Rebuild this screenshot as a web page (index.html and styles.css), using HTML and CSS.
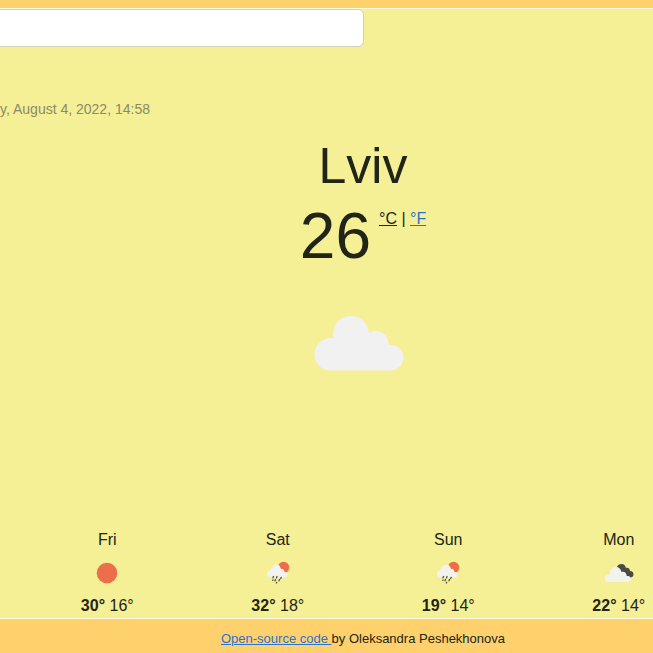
FILE: index.html
```html
<!DOCTYPE html>
<html lang="en">
<head>
<meta charset="utf-8">
<meta name="viewport" content="width=device-width, initial-scale=1">
<title>Weather</title>
<link rel="stylesheet" href="styles.css">
</head>
<body>
<svg class="sprites" aria-hidden="true">
  <defs>
    <symbol id="cloud" viewBox="0 0 90 56">
      <path d="M16 55.500A16 16 0 0 1 0.500 39C0.500 29 9 22 19 23C18 10 25 1 37 1C47 1 54 8 55 18C63 13 74 17 75 30C83 29 89.500 35 89.500 42C89.500 50 84 55.500 76 55.500Z"/>
    </symbol>
    <symbol id="rain" viewBox="0 0 24 24">
      <circle class="sun" cx="17.500" cy="6.500" r="5.700"/>
      <path class="cloud-fill" d="M5 16.500C2 16.500 1 14.500 1 13C1 10.500 3 9 5 9.200C5.200 6 7.500 3.500 10.500 3.500C13 3.500 14.500 5.500 14.800 7.800C17 7.500 18.300 9 18.500 11C20.500 11 21.500 12 21.500 13.700C21.500 15.500 20.500 16.500 18.500 16.500Z"/>
      <path class="drops" d="M7.500 15.500L7 16.800M11 15.500L10.500 16.800M15.200 16.300L14.700 17.600M9.500 18.500L9 19.800M13.500 18.500L13 19.800M10.700 21.300L10.400 22M7 19L6.800 19.400"/>
    </symbol>
    <symbol id="overcast" viewBox="0 0 30 20">
      <path class="dark" d="M13 5C13 2.500 15 1 17.500 1C20 1 21.500 2.500 21.800 4.800C24.500 4.300 26 6 26 8C28.500 8 29.500 9.500 29.500 11.500C29.500 13.500 28 14.500 26.500 14.500H20Z"/>
      <path class="cloud-fill" d="M4.500 19C2 19 0.500 17 0.500 15.500C0.500 13 3 11.300 5.500 11.800C5.500 7.500 8 4 12 4C15 4 17 6 17.500 9C20 8 22.500 9.500 22.800 13C25.500 12.500 27 14 27 16C27 18 25.500 19 23 19Z"/>
    </symbol>
  </defs>
</svg>
<main class="app">
  <div class="content">
    <form class="search">
      <input class="search-input" type="search" aria-label="City">
    </form>
    <p class="updated">y, August 4, 2022, 14:58</p>
    <h1 class="city">Lviv</h1>
    <div class="now">
      <span class="temperature">26</span>
      <span class="units"><a class="active" href="#c">°C</a> | <a href="#f">°F</a></span>
    </div>
    <svg class="cloud" role="img" aria-label="Cloudy"><use href="#cloud"/></svg>
    <ul class="forecast">
      <li class="day">
        <span>Fri</span>
        <svg class="icon" viewBox="0 0 24 24" aria-hidden="true"><circle class="sun" cx="12" cy="12" r="10.300"/></svg>
        <span><b>30°</b> 16°</span>
      </li>
      <li class="day">
        <span>Sat</span>
        <svg class="icon" aria-hidden="true"><use href="#rain"/></svg>
        <span><b>32°</b> 18°</span>
      </li>
      <li class="day">
        <span>Sun</span>
        <svg class="icon" aria-hidden="true"><use href="#rain"/></svg>
        <span><b>19°</b> 14°</span>
      </li>
      <li class="day">
        <span>Mon</span>
        <svg class="icon wide" aria-hidden="true"><use href="#overcast"/></svg>
        <span><b>22°</b> 14°</span>
      </li>
    </ul>
  </div>
</main>
<footer class="footer"><a href="#source">Open-source code </a>by Oleksandra Peshekhonova</footer>
</body>
</html>
```
FILE: styles.css
```css
* {
  box-sizing: border-box;
}

body {
  margin: 0;
  padding-top: 8px;
  overflow-x: hidden;
  background: #ffd16d;
  color: #212518;
  font: 16px/24px "Liberation Sans", Arial, sans-serif;
}

a {
  color: #2b73cf;
}

.sprites {
  position: absolute;
  width: 0;
  height: 0;
}

.app {
  overflow: hidden;
  border: solid #fffbe0;
  border-width: 1px 0;
  background: #f5ef95;
}

/* The content column is wider than the window and runs past both edges. */
.content {
  display: flex;
  flex-direction: column;
  align-items: center;
  margin: 0 -51px 0 22px;
}

.search {
  align-self: stretch;
  margin-left: -44px;
  padding-right: 340px;
}

.search-input {
  display: block;
  width: 100%;
  height: 38px;
  padding: 6px 12px;
  border: 1px solid #ced4b8;
  border-radius: 6px;
  background: #fff;
  font: inherit;
}

.updated {
  align-self: flex-start;
  margin: 50px 0 0 -22px;
  color: #8a8a68;
  font-size: 14px;
}

.city {
  margin: 15px 0 0;
  font-size: 50px;
  font-weight: 400;
  line-height: 60px;
}

.now {
  display: flex;
  gap: 8px;
}

.temperature {
  font-size: 64px;
  line-height: 80px;
}

.units {
  padding-top: 11px;
}

.units .active {
  color: inherit;
}

.cloud {
  width: 90px;
  height: 56px;
  margin: 39px 8px 0 0;
  fill: #f1f1f1;
}

.forecast {
  display: grid;
  grid-template-columns: repeat(4, 1fr);
  align-self: stretch;
  margin: 157px 0 0;
  padding: 0;
  list-style: none;
}

.day {
  display: flex;
  flex-direction: column;
  align-items: center;
}

.icon {
  width: 24px;
  height: 24px;
  margin: 9px 0;
}

.icon.wide {
  width: 30px;
}

.sun {
  fill: #ed6e4b;
}

.cloud-fill {
  fill: #f2f2ee;
}

.dark {
  fill: #4b4b46;
}

.drops {
  fill: none;
  stroke: #55533f;
  stroke-width: 1.300;
  stroke-linecap: round;
}

.footer {
  padding: 8px 0 2px 73px;
  font-size: 13px;
  text-align: center;
}
```
